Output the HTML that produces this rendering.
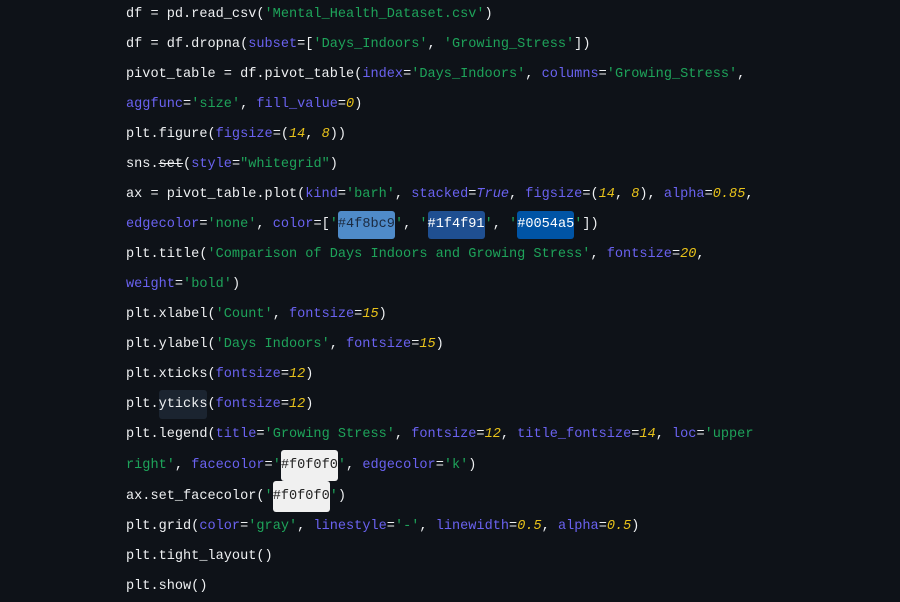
<!DOCTYPE html>
<html><head><meta charset="utf-8"><style>
html,body{margin:0;padding:0;width:900px;height:602px;background:#0e1218;overflow:hidden}
.c{position:absolute;left:126px;top:0px;font-family:"Liberation Mono",monospace;font-size:13.58px;line-height:30px;color:#eef0f2;white-space:pre}
.s{color:#1ea35a}.k{color:#6a62f0}.n{color:#e8c21a;font-style:italic}
.h{display:inline-block;line-height:28px;border-radius:3px}
.b1{background:#4f8bc9;color:#1b2a40}.b2{background:#1f4f91;color:#fff}.b3{background:#0054a5;color:#fff}
.w{background:#f0f0f0;color:#222;line-height:31px}
.y{background:#1b2430;line-height:29px}
.st{text-decoration:line-through}
</style></head><body><div class="c">df = pd.read_csv(<span class="s">'Mental_Health_Dataset.csv'</span>)
df = df.dropna(<span class="k">subset</span>=[<span class="s">'Days_Indoors'</span>, <span class="s">'Growing_Stress'</span>])
pivot_table = df.pivot_table(<span class="k">index</span>=<span class="s">'Days_Indoors'</span>, <span class="k">columns</span>=<span class="s">'Growing_Stress'</span>,
<span class="k">aggfunc</span>=<span class="s">'size'</span>, <span class="k">fill_value</span>=<span class="n">0</span>)
plt.figure(<span class="k">figsize</span>=(<span class="n">14</span>, <span class="n">8</span>))
sns.<span class="st">set</span>(<span class="k">style</span>=<span class="s">"whitegrid"</span>)
ax = pivot_table.plot(<span class="k">kind</span>=<span class="s">'barh'</span>, <span class="k">stacked</span>=<span class="k" style="font-style:italic">True</span>, <span class="k">figsize</span>=(<span class="n">14</span>, <span class="n">8</span>), <span class="k">alpha</span>=<span class="n">0.85</span>,
<span class="k">edgecolor</span>=<span class="s">'none'</span>, <span class="k">color</span>=[<span class="s">'</span><span class="h b1">#4f8bc9</span><span class="s">'</span>, <span class="s">'</span><span class="h b2">#1f4f91</span><span class="s">'</span>, <span class="s">'</span><span class="h b3">#0054a5</span><span class="s">'</span>])
plt.title(<span class="s">'Comparison of Days Indoors and Growing Stress'</span>, <span class="k">fontsize</span>=<span class="n">20</span>,
<span class="k">weight</span>=<span class="s">'bold'</span>)
plt.xlabel(<span class="s">'Count'</span>, <span class="k">fontsize</span>=<span class="n">15</span>)
plt.ylabel(<span class="s">'Days Indoors'</span>, <span class="k">fontsize</span>=<span class="n">15</span>)
plt.xticks(<span class="k">fontsize</span>=<span class="n">12</span>)
plt.<span class="h y">yticks</span>(<span class="k">fontsize</span>=<span class="n">12</span>)
plt.legend(<span class="k">title</span>=<span class="s">'Growing Stress'</span>, <span class="k">fontsize</span>=<span class="n">12</span>, <span class="k">title_fontsize</span>=<span class="n">14</span>, <span class="k">loc</span>=<span class="s">'upper</span>
<span class="s">right'</span>, <span class="k">facecolor</span>=<span class="s">'</span><span class="h w">#f0f0f0</span><span class="s">'</span>, <span class="k">edgecolor</span>=<span class="s">'k'</span>)
ax.set_facecolor(<span class="s">'</span><span class="h w">#f0f0f0</span><span class="s">'</span>)
plt.grid(<span class="k">color</span>=<span class="s">'gray'</span>, <span class="k">linestyle</span>=<span class="s">'-'</span>, <span class="k">linewidth</span>=<span class="n">0.5</span>, <span class="k">alpha</span>=<span class="n">0.5</span>)
plt.tight_layout()
plt.show()</div></body></html>
